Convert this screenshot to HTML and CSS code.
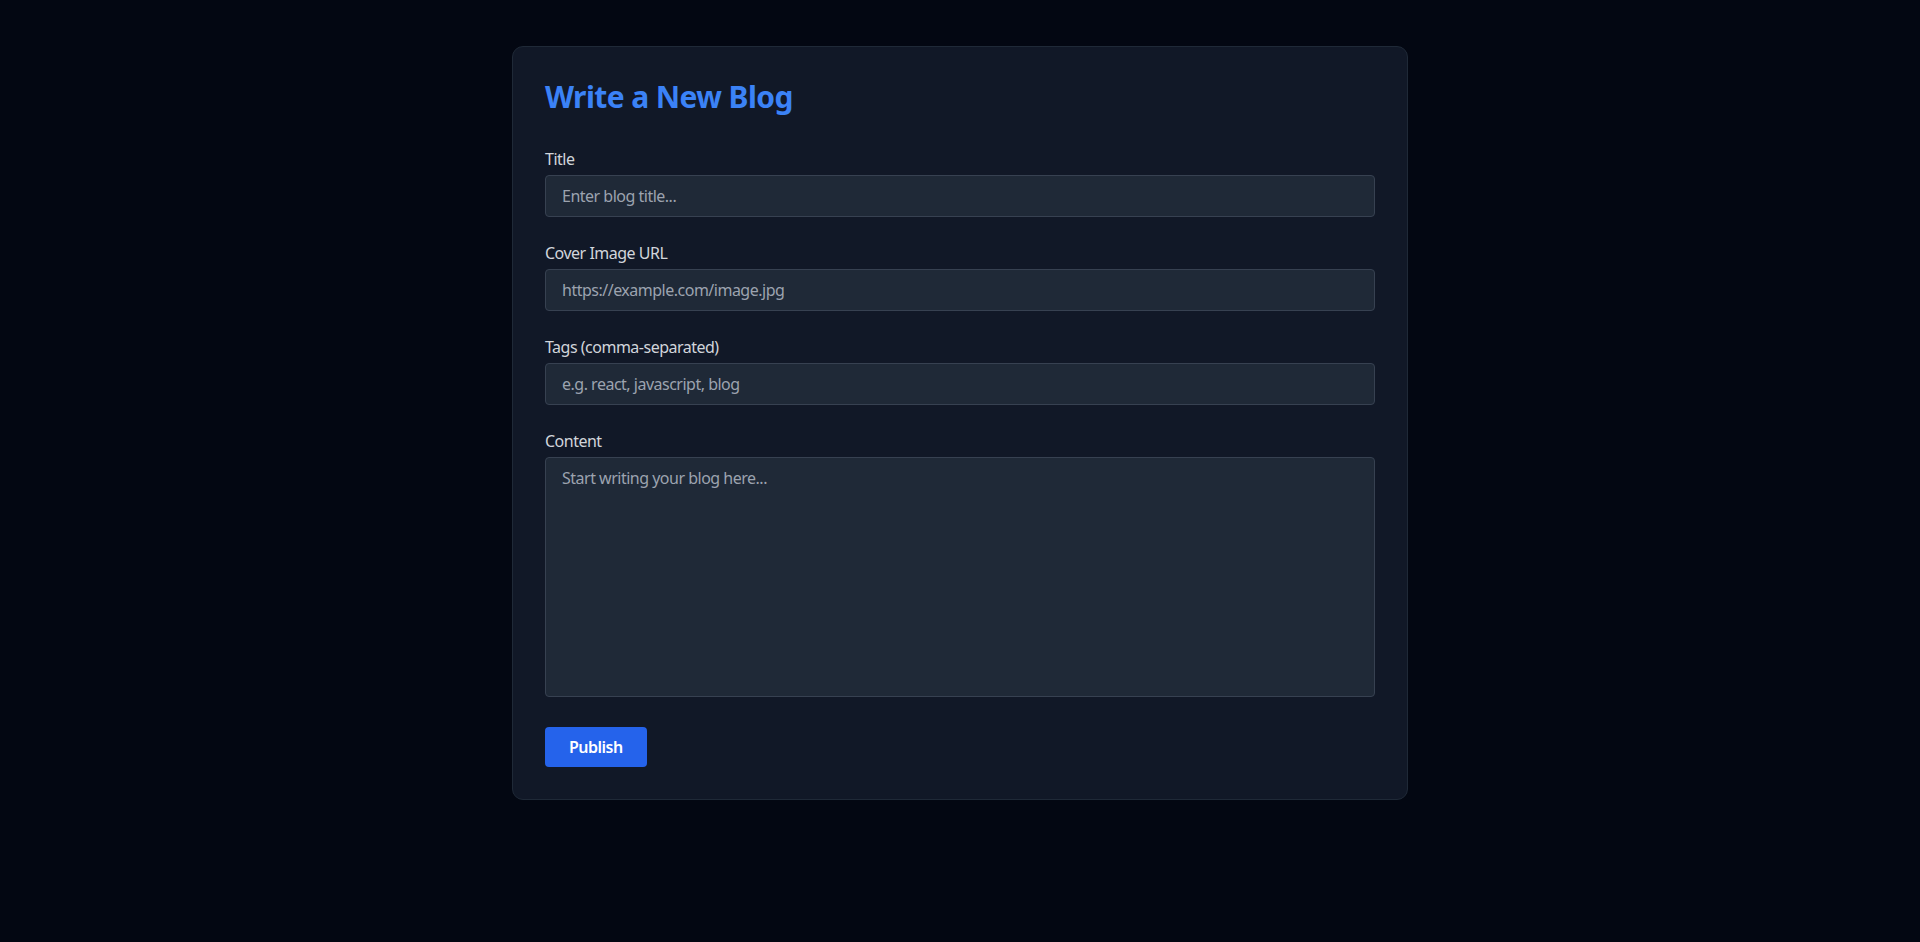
FILE: index.html
```
<!DOCTYPE html>
<html lang="en">
<head>
<meta charset="utf-8">
<title>Write a New Blog</title>
<link rel="stylesheet" href="styles.css">
</head>
<body>
<main class="page">
  <form class="card">
    <h1 class="heading">Write a New Blog</h1>
    <div class="fields">
      <div class="field">
        <label class="label" for="title">Title</label>
        <input class="input" id="title" type="text" placeholder="Enter blog title...">
      </div>
      <div class="field">
        <label class="label" for="cover">Cover Image URL</label>
        <input class="input" id="cover" type="text" placeholder="https://example.com/image.jpg">
      </div>
      <div class="field">
        <label class="label" for="tags">Tags (comma-separated)</label>
        <input class="input" id="tags" type="text" placeholder="e.g. react, javascript, blog">
      </div>
      <div class="field">
        <label class="label" for="content">Content</label>
        <textarea class="input textarea" id="content" placeholder="Start writing your blog here..."></textarea>
      </div>
    </div>
    <button class="button" type="button">Publish</button>
  </form>
</main>
</body>
</html>
```
FILE: styles.css
```
* { box-sizing: border-box; }
html, body { margin: 0; padding: 0; }
body {
  background: #030712;
  font-family: "Noto Sans", "Open Sans", sans-serif;
  letter-spacing: -0.5px;
  color: #d1d5db;
  min-height: 942px;
}
.page {
  display: flex;
  justify-content: center;
  padding-top: 46px;
}
.card {
  width: 896px;
  background: #111827;
  border: 1px solid #1f2937;
  border-radius: 11px;
  padding: 32px;
  display: flex;
  flex-direction: column;
  align-items: flex-start;
  margin: 0;
}
.heading {
  margin: 0 0 32px;
  font-size: 30px;
  line-height: 36px;
  font-weight: 700;
  letter-spacing: -0.6px;
  color: #3b82f6;
}
.fields {
  width: 100%;
  display: flex;
  flex-direction: column;
  gap: 24px;
}
.field {
  display: flex;
  flex-direction: column;
}
.label {
  font-size: 16px;
  line-height: 24px;
  color: #d1d5db;
  margin-bottom: 4px;
}
.input {
  width: 100%;
  height: 42px;
  padding: 8px 16px;
  background: #1f2937;
  border: 1px solid #374151;
  border-radius: 4px;
  color: #e5e7eb;
  font-family: inherit;
  letter-spacing: -0.5px;
  font-size: 16px;
  line-height: 24px;
  outline: none;
  margin: 0;
}
.input::placeholder { color: #9ca3af; opacity: 1; }
.textarea {
  height: 240px;
  resize: none;
}
.button {
  margin-top: 30px;
  height: 40px;
  padding: 0 24px;
  background: #2563eb;
  color: #ffffff;
  border: none;
  border-radius: 4px;
  font-family: inherit;
  letter-spacing: -0.5px;
  font-size: 16px;
  font-weight: 600;
  line-height: 24px;
}
```
